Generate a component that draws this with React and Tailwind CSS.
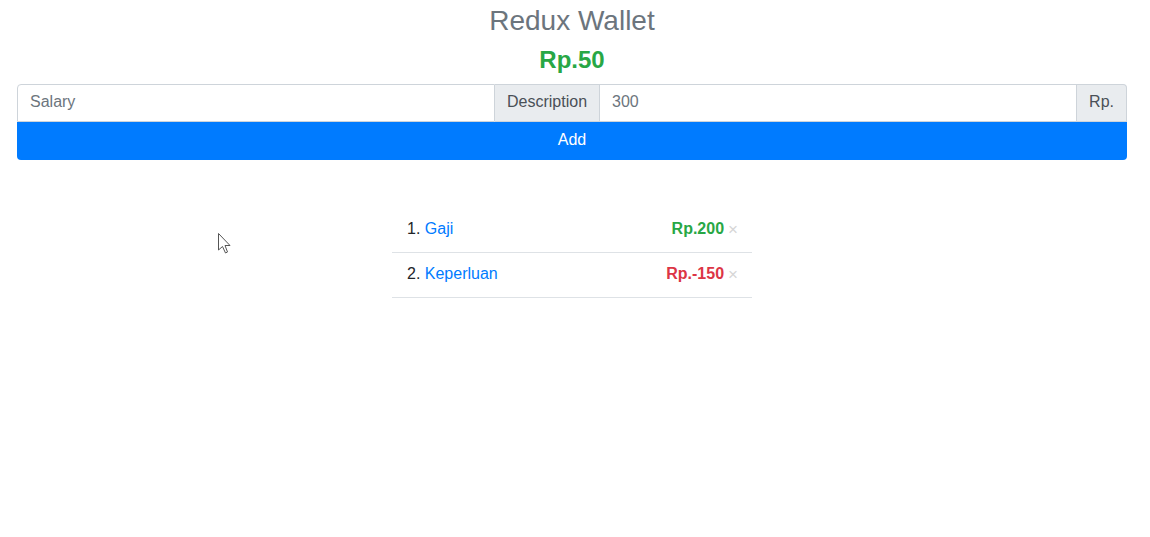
import { useState } from 'react'

const items = [
  { id: 1, desc: 'Gaji', amount: 200 },
  { id: 2, desc: 'Keperluan', amount: -150 },
]

export default function App() {
  const [list] = useState(items)
  const total = list.reduce((s, i) => s + i.amount, 0)

  return (
    <div className="relative min-h-[537px] bg-white font-['Liberation_Sans',Arial,sans-serif] text-[#212529]">
      <div className="pl-[17px] pr-[23px] pt-[4px]">
        <h3 className="text-center text-[28px] leading-[34px] text-[#6c757d]">Redux Wallet</h3>
        <h4 className="mt-[7px] text-center text-[24px] font-bold leading-[29px] text-[#28a745]">Rp.{total}</h4>

        <div className="mt-[10px] flex h-[38px] text-[16px]">
          <input
            className="min-w-0 flex-1 rounded-tl-[4px] border border-[#ced4da] px-3 pb-[2px] text-[#495057] placeholder:text-[#6c757d] outline-none"
            placeholder="Salary"
          />
          <span className="flex items-center border-y border-[#ced4da] bg-[#e9ecef] px-3 pb-[2px] text-[#495057]">Description</span>
          <input
            className="min-w-0 flex-1 border border-[#ced4da] px-3 pb-[2px] text-[#495057] placeholder:text-[#6c757d] outline-none"
            placeholder="300"
          />
          <span className="flex items-center rounded-tr-[4px] border border-l-0 border-[#ced4da] bg-[#e9ecef] px-3 pb-[2px] text-[#495057]">Rp.</span>
        </div>
        <button className="flex h-[38px] w-full items-center justify-center rounded-b-[4px] bg-[#007bff] pb-[2px] text-[16px] text-white">
          Add
        </button>

        <ul className="mx-auto mt-[48px] w-[360px] text-[16px]">
          {list.map((item, i) => (
            <li key={item.id} className="flex h-[45px] items-center justify-between border-b border-[#dee2e6] pl-[15px] pr-[15px] pb-[2px]">
              <span>
                {i + 1}. <a className="text-[#007bff]">{item.desc}</a>
              </span>
              <span className="flex items-center">
                <b className={item.amount < 0 ? 'text-[#dc3545]' : 'text-[#28a745]'}>Rp.{item.amount}</b>
                <span className="ml-[4px] mr-[-1px] text-[17px] leading-none text-[#d6d6d6]">×</span>
              </span>
            </li>
          ))}
        </ul>
      </div>

      <svg className="absolute left-[217px] top-[232px]" width="16" height="24" viewBox="0 0 16 24">
        <path d="M1.5 1.5 L1.5 18 L5.5 14.5 L8.5 21 L10.5 20 L8 13.5 L13 13.5 Z" fill="#fff" stroke="#555" strokeWidth="1" strokeLinejoin="round" />
      </svg>
    </div>
  )
}
